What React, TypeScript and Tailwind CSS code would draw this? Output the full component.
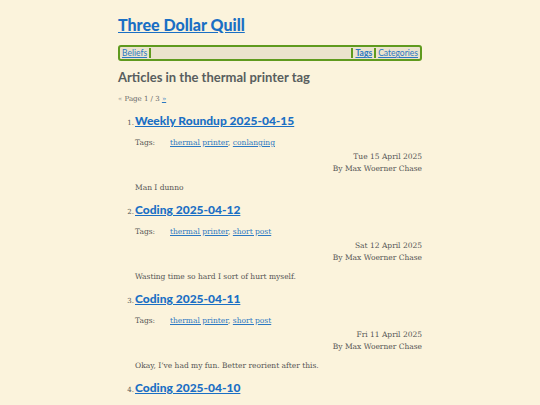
export default function App() {
  const posts = [
    { n: 1, title: "Weekly Roundup 2025-04-15", tags: ["thermal printer", "conlanging"], date: "Tue 15 April 2025", summary: "Man I dunno" },
    { n: 2, title: "Coding 2025-04-12", tags: ["thermal printer", "short post"], date: "Sat 12 April 2025", summary: "Wasting time so hard I sort of hurt myself." },
    { n: 3, title: "Coding 2025-04-11", tags: ["thermal printer", "short post"], date: "Fri 11 April 2025", summary: "Okay, I\u2019ve had my fun. Better reorient after this." },
    { n: 4, title: "Coding 2025-04-10", tags: ["thermal printer", "short post"], date: "Thu 10 April 2025", summary: "" },
  ];

  const sans = "font-['Lato','Open_Sans',sans-serif]";
  const serif = "font-['DejaVu_Serif','Liberation_Serif',serif]";

  return (
    <div className="h-[405px] overflow-hidden bg-[#fbf3dc] text-[#444]">
      <div className="w-[304px] mx-auto pt-[14px]">
        <h1 className={`${sans} text-[16px] font-black leading-[22px] text-[#1a6fc4] underline`}>Three Dollar Quill</h1>
        <nav className={`${sans} mt-[9px] h-[16px] border-2 border-[#5f9a1e] rounded-[3px] bg-[#ebe3cd] flex items-center text-[8.5px] leading-[10px]`}>
          <a className="pl-[2px] pr-[2px] text-[#2b78c2] underline border-r-2 border-[#5f9a1e]">Beliefs</a>
          <div className="flex-1" />
          <a className="px-[2px] font-bold text-[#2b78c2] underline border-l-2 border-r-2 border-[#5f9a1e]">Tags</a>
          <a className="px-[2px] text-[#2b78c2] underline">Categories</a>
        </nav>
        <h2 className={`${sans} mt-[8px] text-[13px] font-bold leading-[16px] text-[#585e5e]`}>Articles in the thermal printer tag</h2>
        <p className={`${serif} mt-[9px] text-[7px] leading-[10px] text-[#666]`}>
          <span className="text-[#888]">«</span> Page 1 / 3 <a className="text-[#2b78c2] underline">»</a>
        </p>
        <ol className="mt-[8px]">
          {posts.map((p) => (
            <li key={p.n} className="h-[89px]">
              <div className="flex items-baseline">
                <span className={`${serif} w-[17px] text-right pr-[1px] text-[7px] text-[#555]`}>{p.n}.</span>
                <a className={`${sans} text-[12px] font-black leading-[18px] text-[#1a6fc4] underline`}>{p.title}</a>
              </div>
              <div className={`${serif} pl-[17px] text-[7.5px] leading-[12px]`}>
                <div className="flex mt-[7px]">
                  <span className="w-[35px] text-[#555]">Tags:</span>
                  <span>
                    <a className="text-[#2b78c2] underline">{p.tags[0]}</a>
                    <span className="text-[#555]">, </span>
                    <a className="text-[#2b78c2] underline">{p.tags[1]}</a>
                  </span>
                </div>
                <div className="mt-[2px] text-right text-[#555]">{p.date}</div>
                <div className="text-right text-[#555]">By Max Woerner Chase</div>
                <p className="mt-[7px] text-[#555]">{p.summary}</p>
              </div>
            </li>
          ))}
        </ol>
      </div>
    </div>
  );
}
